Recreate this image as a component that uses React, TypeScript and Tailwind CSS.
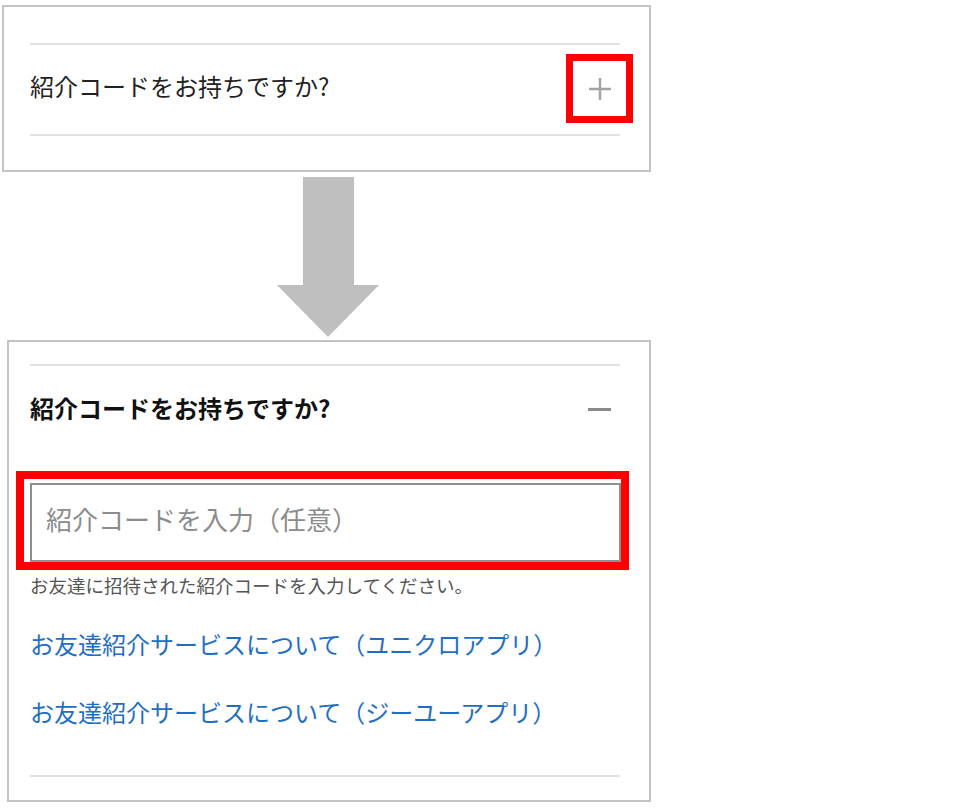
export default function App() {
  return (
    <div className="w-[974px] h-[808px] bg-white font-['Noto_Sans_CJK_JP','Liberation_Sans',sans-serif] overflow-hidden">
      {/* collapsed state */}
      <div className="ml-[2px] mt-[5px] w-[649px] border-2 border-[#c4c4c4] pl-[26px] pr-[29px] pt-[36px] pb-[34px]">
        <div className="border-t-2 border-[#e2e2e2]" />
        <div className="relative flex h-[89px] items-center">
          <span className="mb-[8px] text-[24px] leading-[32px] text-[#222]">紹介コードをお持ちですか?</span>
          <div className="absolute left-[536px] top-[9px] flex h-[69px] w-[67px] items-center justify-center border-[7px] border-[#ff0000]">
            <svg width="22" height="22" viewBox="0 0 22 22">
              <path d="M11 0v22M0 11h22" stroke="#a3a3a3" strokeWidth="2.5" />
            </svg>
          </div>
        </div>
        <div className="border-t-2 border-[#e2e2e2]" />
      </div>

      {/* arrow */}
      <svg className="ml-[277px] mt-[5px] mb-[3px] block" width="102" height="160" viewBox="0 0 102 160">
        <polygon points="26,0 77,0 77,108 102,108 51,160 0,108 26,108" fill="#bfbfbf" />
      </svg>

      {/* expanded state */}
      <div className="ml-[7px] w-[644px] border-2 border-[#c4c4c4] pl-[21px] pr-[29px] pt-[22px] pb-[23px]">
        <div className="border-t-2 border-[#e2e2e2]" />
        <div className="flex h-[86px] items-center justify-between">
          <span className="mb-[2px] text-[24px] font-bold leading-[32px] text-[#111]">紹介コードをお持ちですか?</span>
          <div className="mr-[9px] h-[3px] w-[23px] bg-[#8a8a8a]" />
        </div>
        <div className="ml-[-14px] mr-[-9px] mt-[19px] border-[8px] border-[#ff0000] pl-[6px] pt-[4px]">
          <div className="flex h-[79px] items-center border-2 border-[#8f8f8f] pl-[14px]">
            <span className="mb-[7px] text-[26px] leading-[34px] text-[#8c8c8c]">紹介コードを入力（任意）</span>
          </div>
        </div>
        <p className="mt-[3px] text-[18.5px] leading-[24px] text-[#555]">お友達に招待された紹介コードを入力してください。</p>
        <p className="mt-[31px] text-[24px] leading-[32px] text-[#1f6ec4]">お友達紹介サービスについて（ユニクロアプリ）</p>
        <p className="mt-[36px] text-[24px] leading-[32px] text-[#1f6ec4]">お友達紹介サービスについて（ジーユーアプリ）</p>
        <div className="mt-[47px] border-t-2 border-[#e2e2e2]" />
      </div>
    </div>
  );
}
